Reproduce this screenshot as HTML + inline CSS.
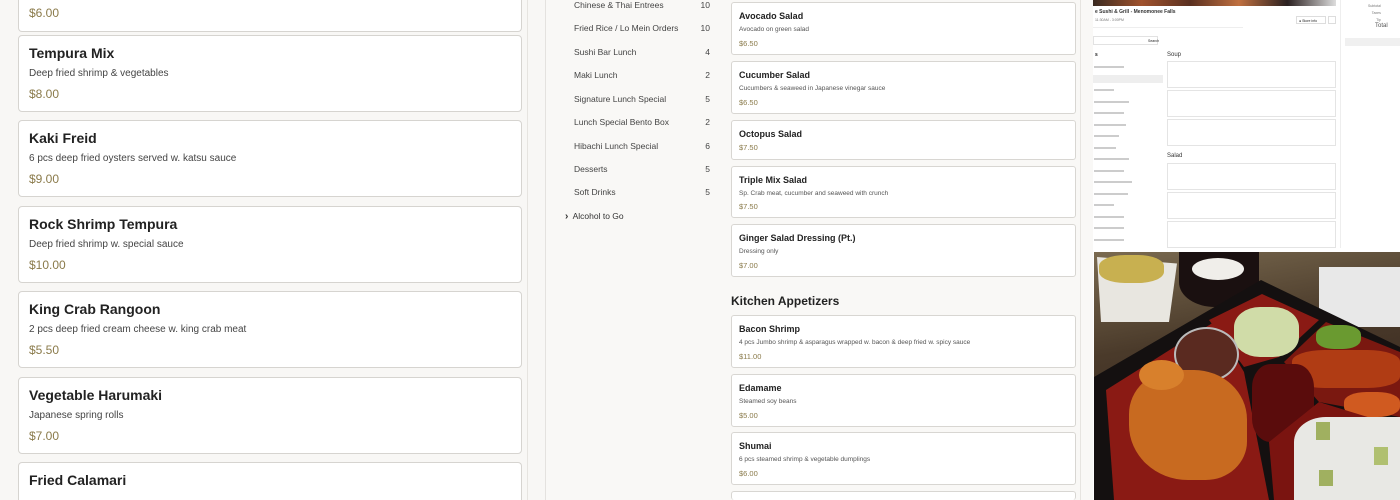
<!DOCTYPE html>
<html style="width:1400px;height:500px;overflow:hidden"><head><meta charset="utf-8"><style>
*{box-sizing:border-box;margin:0;padding:0}
body{width:1400px;height:500px;overflow:hidden;position:relative;background:#fff;font-family:"Liberation Sans",sans-serif;color:#222}
.abs{position:absolute}
.lp{left:0;top:0;width:546px;height:500px;background:#f8f7f5;border-right:1px solid #e4e2df}
.lc{position:absolute;left:18px;width:504px;height:77px;background:#fff;border:1px solid #d6d4d0;border-radius:4px;overflow:hidden}
.lc h3{position:absolute;left:10px;top:9px;font-size:14px;font-weight:bold;color:#222}
.lc p{position:absolute;left:10px;top:32px;font-size:10px;color:#444}
.lc .pr{position:absolute;left:10px;top:51px;font-size:12px;color:#8a7a4a}
.mp{left:546px;top:0;width:547px;height:500px;background:#f9f8f6}
.nav{position:absolute;left:574px;font-size:8.5px;color:#444;width:136px}
.nav span{position:absolute;right:0}
.mc{position:absolute;left:731px;width:345px;background:#fff;border:1px solid #d8d6d2;border-radius:3px}
.mc h4{position:absolute;left:7px;top:8px;font-size:9px;font-weight:bold;color:#222}
.mc p{position:absolute;left:7px;top:23px;font-size:6.5px;color:#555}
.mc .pr{position:absolute;left:7px;font-size:7.5px;color:#8a7a4a}
.t{position:absolute;background:#ccc;height:2px}
.wrap{position:absolute;left:0;top:0;width:1400px;height:500px;overflow:hidden}
</style></head><body><div class="wrap">
<div class="abs lp"></div>
<div class="lc" style="top:0;height:32px;border-top:none;border-radius:0 0 4px 4px"><div class="pr" style="top:6px">$6.00</div></div>
<div class="lc" style="top:35px"><h3>Tempura Mix</h3><p>Deep fried shrimp &amp; vegetables</p><div class="pr">$8.00</div></div>
<div class="lc" style="top:120px"><h3>Kaki Freid</h3><p>6 pcs deep fried oysters served w. katsu sauce</p><div class="pr">$9.00</div></div>
<div class="lc" style="top:206px"><h3>Rock Shrimp Tempura</h3><p>Deep fried shrimp w. special sauce</p><div class="pr">$10.00</div></div>
<div class="lc" style="top:291px"><h3>King Crab Rangoon</h3><p>2 pcs deep fried cream cheese w. king crab meat</p><div class="pr">$5.50</div></div>
<div class="lc" style="top:377px"><h3>Vegetable Harumaki</h3><p>Japanese spring rolls</p><div class="pr">$7.00</div></div>
<div class="lc" style="top:462px;height:38px;border-bottom:none;border-radius:4px 4px 0 0"><h3>Fried Calamari</h3></div>
<div class="abs" style="left:527px;top:0;width:1px;height:500px;background:#e6e4e0"></div>

<div class="abs mp"></div>
<div class="nav" style="top:0">Chinese &amp; Thai Entrees<span>10</span></div>
<div class="nav" style="top:23px">Fried Rice / Lo Mein Orders<span>10</span></div>
<div class="nav" style="top:47px">Sushi Bar Lunch<span>4</span></div>
<div class="nav" style="top:70px">Maki Lunch<span>2</span></div>
<div class="nav" style="top:94px">Signature Lunch Special<span>5</span></div>
<div class="nav" style="top:117px">Lunch Special Bento Box<span>2</span></div>
<div class="nav" style="top:141px">Hibachi Lunch Special<span>6</span></div>
<div class="nav" style="top:164px">Desserts<span>5</span></div>
<div class="nav" style="top:187px">Soft Drinks<span>5</span></div>
<div class="nav" style="top:211px;left:565px;color:#333"><b style="font-size:10px">›</b>&nbsp; Alcohol to Go</div>

<div class="mc" style="top:2px;height:53px"><h4>Avocado Salad</h4><p>Avocado on green salad</p><div class="pr" style="top:36px">$6.50</div></div>
<div class="mc" style="top:61px;height:53px"><h4>Cucumber Salad</h4><p>Cucumbers &amp; seaweed in Japanese vinegar sauce</p><div class="pr" style="top:36px">$6.50</div></div>
<div class="mc" style="top:120px;height:40px"><h4>Octopus Salad</h4><div class="pr" style="top:22px">$7.50</div></div>
<div class="mc" style="top:166px;height:52px"><h4>Triple Mix Salad</h4><p>Sp. Crab meat, cucumber and seaweed with crunch</p><div class="pr" style="top:35px">$7.50</div></div>
<div class="mc" style="top:224px;height:53px"><h4>Ginger Salad Dressing (Pt.)</h4><p>Dressing only</p><div class="pr" style="top:36px">$7.00</div></div>
<div class="abs" style="left:731px;top:294px;font-size:12px;font-weight:bold;color:#222">Kitchen Appetizers</div>
<div class="mc" style="top:315px;height:53px"><h4>Bacon Shrimp</h4><p>4 pcs Jumbo shrimp &amp; asparagus wrapped w. bacon &amp; deep fried w. spicy sauce</p><div class="pr" style="top:36px">$11.00</div></div>
<div class="mc" style="top:374px;height:53px"><h4>Edamame</h4><p>Steamed soy beans</p><div class="pr" style="top:36px">$5.00</div></div>
<div class="mc" style="top:432px;height:53px"><h4>Shumai</h4><p>6 pcs steamed shrimp &amp; vegetable dumplings</p><div class="pr" style="top:36px">$6.00</div></div>
<div class="mc" style="top:491px;height:9px;border-bottom:none"></div>
<div class="abs" style="left:1080px;top:0;width:1px;height:500px;background:#e6e4e0"></div>

<div class="abs" style="left:1093px;top:0;width:307px;height:252px;background:#fff">
 <div class="abs" style="left:0;top:0;width:243px;height:6px;background:linear-gradient(90deg,#3a2a20,#a0522d,#5a3020,#c07040,#2a2020,#ddd)"></div>
 <div class="abs" style="left:2px;top:9px;font-size:5px;font-weight:bold;color:#333">e Sushi &amp; Grill - Menomonee Falls</div>
 <div class="abs" style="left:2px;top:18px;font-size:3.5px;color:#777">11:30AM - 3:00PM</div>
 <div class="abs" style="left:203px;top:16px;width:30px;height:8px;border:1px solid #ddd;font-size:3.5px;padding:2px">● Store info</div>
 <div class="abs" style="left:235px;top:16px;width:8px;height:8px;border:1px solid #ddd"></div>
 <div class="abs" style="left:0;top:27px;width:150px;height:1px;background:#eee"></div>
 <div class="abs" style="left:0;top:36px;width:65px;height:9px;border:1px solid #e2e2e2"></div>
 <div class="abs" style="left:55px;top:39px;font-size:3.5px">Search</div>
 <div class="abs" style="left:2px;top:52px;font-size:5px;font-weight:bold">s</div>
 <div class="abs" style="left:0;top:75px;width:70px;height:8px;background:#eee"></div>
 <div class="abs" style="left:74px;top:52px;font-size:6px;color:#333">Soup</div>
 <div class="abs" style="left:74px;top:61px;width:169px;height:27px;border:1px solid #e4e4e4"></div>
 <div class="abs" style="left:74px;top:90px;width:169px;height:27px;border:1px solid #e4e4e4"></div>
 <div class="abs" style="left:74px;top:119px;width:169px;height:27px;border:1px solid #e4e4e4"></div>
 <div class="abs" style="left:74px;top:153px;font-size:6px;color:#333">Salad</div>
 <div class="abs" style="left:74px;top:163px;width:169px;height:27px;border:1px solid #e4e4e4"></div>
 <div class="abs" style="left:74px;top:192px;width:169px;height:27px;border:1px solid #e4e4e4"></div>
 <div class="abs" style="left:74px;top:221px;width:169px;height:27px;border:1px solid #e4e4e4"></div>
 <div class="abs" style="left:247px;top:0;width:1px;height:248px;background:#eee"></div>
 <div class="abs" style="left:275px;top:3px;font-size:3.5px;color:#777;text-align:right;line-height:7px">Subtotal<br>Taxes<br>Tip</div>
 <div class="abs" style="left:282px;top:23px;font-size:6px;color:#555">Total</div>
 <div class="abs" style="left:252px;top:38px;width:55px;height:8px;background:#f0f0f0"></div>
</div>
<div class="t" style="left:1094px;top:66px;width:30px"></div><div class="t" style="left:1094px;top:89px;width:20px"></div>
<div class="t" style="left:1094px;top:101px;width:35px"></div><div class="t" style="left:1094px;top:112px;width:30px"></div>
<div class="t" style="left:1094px;top:124px;width:32px"></div><div class="t" style="left:1094px;top:135px;width:25px"></div>
<div class="t" style="left:1094px;top:147px;width:22px"></div><div class="t" style="left:1094px;top:158px;width:35px"></div>
<div class="t" style="left:1094px;top:170px;width:30px"></div><div class="t" style="left:1094px;top:181px;width:38px"></div>
<div class="t" style="left:1094px;top:193px;width:34px"></div><div class="t" style="left:1094px;top:204px;width:20px"></div>
<div class="t" style="left:1094px;top:216px;width:30px"></div><div class="t" style="left:1094px;top:227px;width:30px"></div>
<div class="t" style="left:1094px;top:239px;width:30px"></div>

<div class="abs" style="left:1094px;top:252px;width:306px;height:248px;overflow:hidden;background:#4a3828">
 <div class="abs" style="left:0;top:0;width:306px;height:248px;background:linear-gradient(170deg,#7a6a50 0%,#4a3a2a 35%,#2a1a18 100%)"></div>
 <div class="abs" style="left:3px;top:5px;width:80px;height:65px;background:#e8e6e0;clip-path:polygon(0 0,100% 10%,90% 100%,5% 100%)"></div>
 <div class="abs" style="left:5px;top:3px;width:65px;height:28px;background:#c8b050;border-radius:40%"></div>
 <div class="abs" style="left:85px;top:0;width:80px;height:55px;background:#1a1010;border-radius:0 0 45% 45%"></div>
 <div class="abs" style="left:98px;top:6px;width:52px;height:22px;background:#f0eeea;border-radius:50%"></div>
 <div class="abs" style="left:225px;top:15px;width:81px;height:60px;background:#e8e8e8"></div>
 <div class="abs" style="left:0;top:0;width:306px;height:248px;background:#141010;clip-path:polygon(0 125px,167px 28px,306px 95px,306px 248px,0 248px)"></div>
 <div class="abs" style="left:0;top:0;width:306px;height:248px;background:#8a1a14;clip-path:polygon(12px 138px,120px 70px,150px 120px,175px 248px,20px 248px)"></div>
 <div class="abs" style="left:0;top:0;width:306px;height:248px;background:#8a1a14;clip-path:polygon(115px 68px,168px 42px,225px 68px,185px 105px,150px 115px)"></div>
 <div class="abs" style="left:140px;top:55px;width:65px;height:50px;background:#d0dca8;border-radius:40%"></div>
 <div class="abs" style="left:0;top:0;width:306px;height:248px;background:#7a1810;clip-path:polygon(190px 110px,232px 70px,306px 100px,306px 165px,225px 150px)"></div>
 <div class="abs" style="left:198px;top:98px;width:108px;height:38px;background:#b03c14;border-radius:30%"></div>
 <div class="abs" style="left:222px;top:73px;width:45px;height:24px;background:#6a9a30;border-radius:40%"></div>
 <div class="abs" style="left:250px;top:140px;width:56px;height:25px;background:#d05a20;border-radius:40%"></div>
 <div class="abs" style="left:158px;top:112px;width:62px;height:78px;background:#5a0c0c;border-radius:30%"></div>
 <div class="abs" style="left:0;top:0;width:306px;height:248px;background:#7a1410;clip-path:polygon(175px 190px,225px 150px,306px 175px,306px 248px,180px 248px)"></div>
 <div class="abs" style="left:80px;top:75px;width:65px;height:55px;background:#5a2a20;border:2px solid #bbb;border-radius:50%"></div>
 <div class="abs" style="left:35px;top:118px;width:118px;height:110px;background:#c86a20;border-radius:40% 45% 35% 50%"></div>
 <div class="abs" style="left:45px;top:108px;width:45px;height:30px;background:#d8802c;border-radius:50%"></div>
 <div class="abs" style="left:200px;top:165px;width:106px;height:83px;background:#e8e8e4;border-radius:30% 0 0 0"></div>
 <div class="abs" style="left:222px;top:170px;width:14px;height:18px;background:#a0b060"></div>
 <div class="abs" style="left:280px;top:195px;width:14px;height:18px;background:#b0c070"></div>
 <div class="abs" style="left:225px;top:218px;width:14px;height:16px;background:#a0b060"></div>
</div>
</div></body></html>
